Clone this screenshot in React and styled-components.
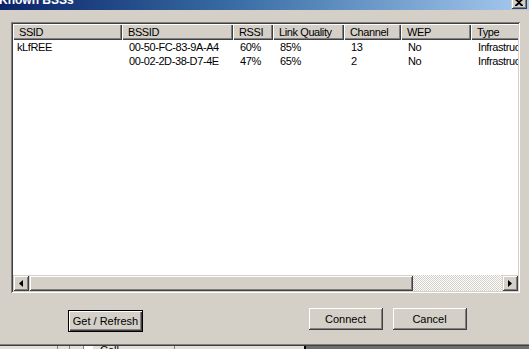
import styled, { createGlobalStyle } from 'styled-components';

const GlobalStyle = createGlobalStyle`
  html, body {
    margin: 0;
    padding: 0;
    background: #d4d0c8;
    overflow: hidden;
  }
  body {
    font-family: 'Liberation Sans', Arial, sans-serif;
    font-size: 11px;
    color: #000;
  }
`;

// Колонки списка: ширина каждой в пикселях, последняя обрезается рамкой.
const COLUMNS = [
  { title: 'SSID', width: 109 },
  { title: 'BSSID', width: 111 },
  { title: 'RSSI', width: 40 },
  { title: 'Link Quality', width: 71 },
  { title: 'Channel', width: 57 },
  { title: 'WEP', width: 70 },
  { title: 'Type', width: 80 }
];

const BSS_LIST = [
  ['kLfREE', '00-50-FC-83-9A-A4', '60%', '85%', '13', 'No', 'Infrastructure'],
  ['', '00-02-2D-38-D7-4E', '47%', '65%', '2', 'No', 'Infrastructure']
];

const GRID = COLUMNS.map((c) => `${c.width}px`).join(' ');

const RAISED = `
  inset 1px 1px #d4d0c8,
  inset -1px -1px #404040,
  inset 2px 2px #fff,
  inset -2px -2px #808080
`;

export default function App() {
  return (
    <>
      <GlobalStyle />
      <Window>
        <TitleBar>
          <TitleText>Known BSSs</TitleText>
          <CloseButton>
            <svg width="8" height="7" viewBox="0 0 8 7">
              <path d="M0 0h2l2 2 2-2h2v1L5 3.5 8 6v1H6L4 5 2 7H0V6l3-2.5L0 1z" fill="#000" />
            </svg>
          </CloseButton>
        </TitleBar>

        <Body>
          <ListView>
            <ListArea>
              <HeaderRow>
                {COLUMNS.map((c) => (
                  <HeaderCell key={c.title}>{c.title}</HeaderCell>
                ))}
              </HeaderRow>
              {BSS_LIST.map((row) => (
                <Row key={row[1]}>
                  {row.map((value, i) => (
                    <Cell key={i} first={i === 0}>
                      {value}
                    </Cell>
                  ))}
                </Row>
              ))}
            </ListArea>

            <ScrollBar>
              <ArrowButton>
                <svg width="4" height="7" viewBox="0 0 4 7">
                  <path d="M4 0v7L0 3.5z" fill="#000" />
                </svg>
              </ArrowButton>
              <Thumb />
              <Track />
              <ArrowButton>
                <svg width="4" height="7" viewBox="0 0 4 7">
                  <path d="M0 0v7l4-3.5z" fill="#000" />
                </svg>
              </ArrowButton>
            </ScrollBar>
          </ListView>

          <ButtonRow>
            <Button isDefault>Get / Refresh</Button>
            <ButtonGroup>
              <Button>Connect</Button>
              <Button>Cancel</Button>
            </ButtonGroup>
          </ButtonRow>
        </Body>

        <DialogEdge />

        <Strip>
          <StripLeft>
            <StripCell width={57} />
            <StripCell width={11} />
            <WhiteBox />
            <StripText>Cell</StripText>
            <StripCell width={55} />
          </StripLeft>
          <DarkPanel />
        </Strip>
      </Window>
    </>
  );
}

const Window = styled.div`
  width: 529px;
  height: 349px;
  display: flex;
  flex-direction: column;
  overflow: hidden;
`;

const TitleBar = styled.div`
  height: 10px;
  flex-shrink: 0;
  display: flex;
  align-items: flex-start;
  overflow: hidden;
  background: linear-gradient(to right, #0a246a 0%, #3a6ea5 45%, #a6caf0 100%);
`;

const TitleText = styled.div`
  flex: 1;
  margin-top: -7px;
  margin-left: -1px;
  color: #fff;
  font-weight: bold;
  font-size: 12px;
  line-height: 14px;
  white-space: nowrap;
`;

const CloseButton = styled.div`
  width: 16px;
  height: 14px;
  margin-top: -5px;
  margin-right: 2px;
  display: flex;
  align-items: center;
  justify-content: center;
  background: #d4d0c8;
  box-shadow: ${RAISED};

  svg {
    margin-top: 1px;
  }
`;

const Body = styled.div`
  flex: 1;
  display: flex;
  flex-direction: column;
  padding: 12px 9px 0 11px;
`;

const ListView = styled.div`
  height: 271px;
  box-sizing: border-box;
  padding: 2px;
  display: flex;
  flex-direction: column;
  background: #fff;
  box-shadow:
    inset 1px 1px #808080,
    inset -1px -1px #fff,
    inset 2px 2px #404040,
    inset -2px -2px #d4d0c8;
`;

const ListArea = styled.div`
  flex: 1;
  overflow: hidden;
  letter-spacing: -0.4px;
`;

const HeaderRow = styled.div`
  display: grid;
  grid-template-columns: ${GRID};
`;

const HeaderCell = styled.div`
  height: 16px;
  line-height: 16px;
  padding-left: 6px;
  white-space: nowrap;
  overflow: hidden;
  background: #d4d0c8;
  box-shadow:
    inset 1px 1px #fff,
    inset -1px -1px #404040,
    inset -2px -2px #808080;
`;

const Row = styled.div`
  display: grid;
  grid-template-columns: ${GRID};
`;

const Cell = styled.div`
  height: 14px;
  line-height: 14px;
  padding-left: ${({ first }) => (first ? 4 : 7)}px;
  white-space: nowrap;
`;

const ScrollBar = styled.div`
  height: 16px;
  flex-shrink: 0;
  display: flex;
`;

const ArrowButton = styled.div`
  width: 16px;
  height: 16px;
  display: flex;
  align-items: center;
  justify-content: center;
  background: #d4d0c8;
  box-shadow: ${RAISED};
`;

const Thumb = styled.div`
  width: 384px;
  height: 16px;
  background: #d4d0c8;
  box-shadow: ${RAISED};
`;

const Track = styled.div`
  flex: 1;
  background: repeating-conic-gradient(#fff 0 25%, #d4d0c8 0 50%) 0 0 / 2px 2px;
`;

const ButtonRow = styled.div`
  display: flex;
  align-items: flex-start;
  margin-top: 14px;
`;

const ButtonGroup = styled.div`
  display: flex;
  gap: 9px;
  margin-left: auto;
  margin-right: 53px;
`;

const Button = styled.button`
  width: 75px;
  height: ${({ isDefault }) => (isDefault ? 22 : 23)}px;
  margin: ${({ isDefault }) => (isDefault ? '3px 0 0 57px' : '0')};
  padding: 0;
  border: none;
  background: #d4d0c8;
  color: #000;
  font-family: 'Liberation Sans', Arial, sans-serif;
  font-size: 11px;
  box-shadow: ${({ isDefault }) =>
    isDefault
      ? `inset 0 0 0 1px #000, inset 2px 2px #fff, inset -2px -2px #404040, inset -3px -3px #808080`
      : RAISED};
`;

const DialogEdge = styled.div`
  height: 2px;
  flex-shrink: 0;
  box-sizing: border-box;
  border-top: 1px solid #808080;
  border-bottom: 1px solid #404040;
`;

const Strip = styled.div`
  height: 3px;
  flex-shrink: 0;
  display: flex;
  overflow: hidden;
`;

const StripLeft = styled.div`
  width: 304px;
  display: flex;
  background: #e4e1da;
`;

const StripCell = styled.div`
  width: ${({ width }) => width}px;
  border-right: 1px solid #808080;
`;

const WhiteBox = styled.div`
  width: 9px;
  margin-left: 13px;
  background: #fff;
  border-left: 1px solid #808080;
`;

const StripText = styled.div`
  margin-left: 7px;
  margin-top: -1px;
  font-size: 11px;
  line-height: 11px;
`;

const DarkPanel = styled.div`
  flex: 1;
  background: #6e6e6e;
  border-left: 2px solid #000;
`;
